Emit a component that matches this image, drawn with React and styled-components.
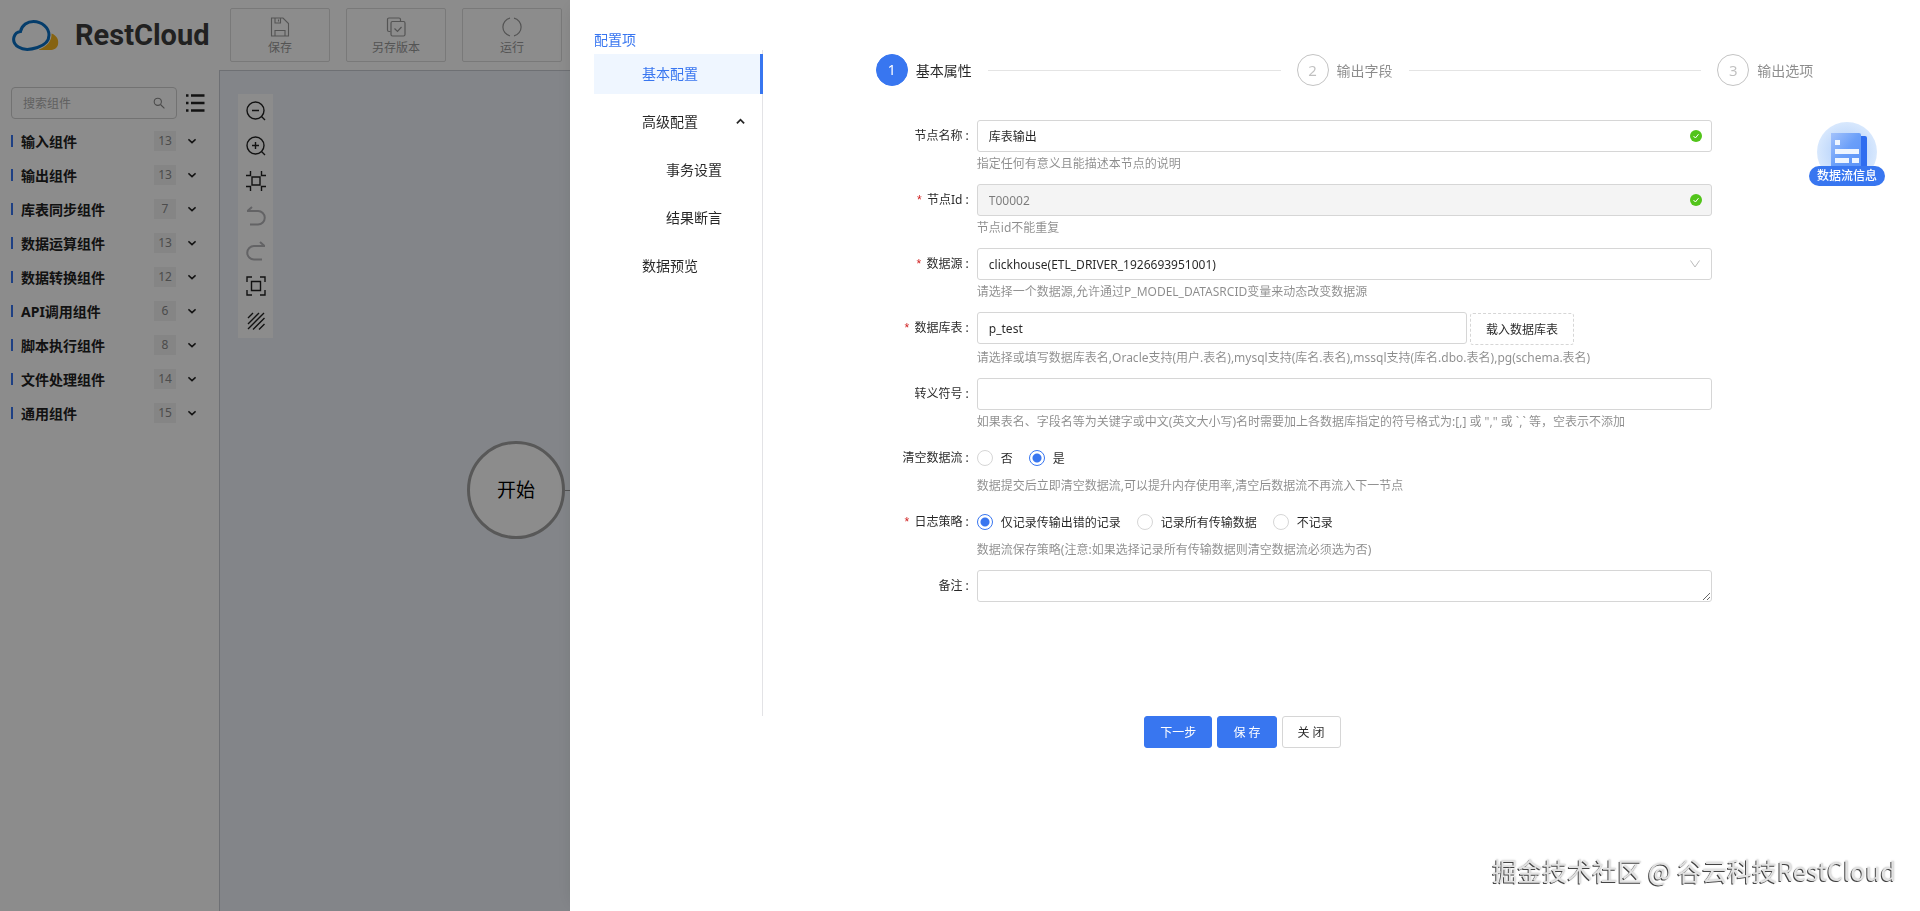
import React, { useState } from 'react';
import styled, { createGlobalStyle } from 'styled-components';

const BLUE = '#3876f0';

const GlobalStyle = createGlobalStyle`
  * { box-sizing: border-box; }
  body {
    margin: 0;
    font-family: "Noto Sans", "Noto Sans CJK SC", sans-serif;
    font-size: 12px;
    color: rgba(0, 0, 0, 0.85);
    background: #fff;
  }
  button, input, select, textarea { font: inherit; color: inherit; }
  button { cursor: pointer; }
  ul { list-style: none; margin: 0; padding: 0; }
  svg { flex: none; }
`;

// Designer page, behind the drawer

const Page = styled.div`
  display: flex;
  flex-direction: column;
  min-height: 100vh;
`;

const Header = styled.header`
  display: flex;
  align-items: center;
  gap: 16px;
  height: 70px;
  padding-left: 11px;
  overflow: hidden;
`;

const Brand = styled.div`
  display: flex;
  flex: none;
  align-items: center;
  gap: 16px;
  width: 203px;
  font-family: Roboto, sans-serif;
  font-size: 29px;
  font-weight: 700;
  color: #3c3c3c;
`;

const ToolButton = styled.button`
  display: flex;
  flex: none;
  flex-direction: column;
  align-items: center;
  justify-content: center;
  gap: 2px;
  width: 100px;
  height: 54px;
  padding: 4px 0 0;
  line-height: 18px;
  color: #999;
  background: #fff;
  border: 1px solid #dcdcdc;
  border-radius: 2px;
`;

const Workspace = styled.div`
  display: flex;
  flex: 1;
`;

const Sidebar = styled.aside`
  flex: none;
  width: 219px;
  padding: 17px 14px 0 11px;
`;

const SearchRow = styled.div`
  display: flex;
  align-items: center;
  gap: 8px;
  margin-bottom: 6px;
`;

const SearchBox = styled.label`
  display: flex;
  flex: 1;
  align-items: center;
  min-width: 0;
  height: 32px;
  padding: 0 11px;
  color: #888;
  border: 1px solid #cfcfcf;
  border-radius: 4px;

  input {
    flex: 1;
    min-width: 0;
    padding: 0;
    border: 0;
    outline: 0;
    background: none;
  }
  input::placeholder { color: #b0b0b0; }
`;

const IconButton = styled.button`
  display: flex;
  padding: 0;
  border: 0;
  background: none;
  color: ${({ $muted }) => ($muted ? '#b4b4b8' : '#222')};
`;

const GroupButton = styled.button`
  display: flex;
  align-items: center;
  width: 100%;
  height: 34px;
  padding: 0 9px 2px 0;
  border: 0;
  background: none;
  text-align: left;
  font-size: 14px;
  font-weight: 700;
  color: #222;

  &::before {
    content: '';
    width: 2px;
    height: 12px;
    margin-right: 8px;
    background: ${BLUE};
  }
`;

const GroupName = styled.span`
  flex: 1;
`;

const Count = styled.span`
  width: 22px;
  margin-right: 12px;
  line-height: 20px;
  font-size: 12px;
  font-weight: 400;
  text-align: center;
  color: #8a8a8a;
  background: #f3f3f3;
`;

const Canvas = styled.main`
  position: relative;
  flex: 1;
  background: #eff3f9;
  border-top: 1px solid #c8ccd4;
  border-left: 1px solid #c8ccd4;
`;

const CanvasTools = styled.div`
  position: absolute;
  top: 23px;
  left: 18px;
  display: flex;
  flex-direction: column;
  align-items: center;
  gap: 15px;
  width: 35px;
  padding: 7px 0;
  background: #fff;
`;

const StartNode = styled.div`
  position: absolute;
  top: 370px;
  left: 247px;
  display: flex;
  align-items: center;
  justify-content: center;
  width: 98px;
  height: 98px;
  padding-bottom: 2px;
  font-size: 19px;
  color: #000;
  background: #fff;
  border: 3px solid #a0a0a0;
  border-radius: 50%;
`;

const Edge = styled.div`
  position: absolute;
  top: 419px;
  left: 345px;
  width: 120px;
  height: 1px;
  background: #999;
`;

// Drawer

const Mask = styled.div`
  position: fixed;
  inset: 0;
  background: rgba(0, 0, 0, 0.45);
`;

const Drawer = styled.section`
  position: fixed;
  top: 0;
  right: 0;
  bottom: 0;
  left: 570px;
  padding: 30px 24px 24px;
  overflow: auto;
  background: #fff;
  box-shadow: -6px 0 16px -8px rgba(0, 0, 0, 0.12);
`;

const DrawerBody = styled.div`
  display: flex;
  gap: 30px;
  min-height: calc(100vh - 225px);
`;

const MenuColumn = styled.nav`
  display: flex;
  flex: none;
  flex-direction: column;
  width: 169px;
`;

const MenuTitle = styled.div`
  line-height: 20px;
  font-size: 14px;
  color: ${BLUE};
`;

const Menu = styled.ul`
  flex: 1;
  display: flex;
  flex-direction: column;
  gap: 8px;
  padding-top: 4px;
  border-right: 1px solid #e3e3e6;
`;

const MenuItem = styled.button`
  display: flex;
  align-items: center;
  justify-content: space-between;
  width: 169px;
  height: 40px;
  padding: 0 15px 2px ${({ $sub }) => ($sub ? '72px' : '48px')};
  border: 0;
  border-right: 3px solid ${({ $active }) => ($active ? BLUE : 'transparent')};
  background: ${({ $active }) => ($active ? '#eff6ff' : 'none')};
  font-size: 14px;
  color: ${({ $active }) => ($active ? BLUE : 'inherit')};
`;

const Content = styled.div`
  flex: 1;
  min-width: 0;
  padding-top: 24px;
`;

const Steps = styled.ol`
  display: flex;
  gap: 16px;
  width: 85%;
  margin: 0 auto 34px;
  padding: 0;
  list-style: none;
`;

const Step = styled.li`
  display: flex;
  flex: ${({ $last }) => ($last ? 'none' : '1')};
  align-items: center;
  font-size: 14px;
  color: ${({ $active }) => ($active ? 'rgba(0, 0, 0, 0.85)' : 'rgba(0, 0, 0, 0.45)')};

  &::after {
    content: '';
    display: ${({ $last }) => ($last ? 'none' : 'block')};
    flex: 1;
    height: 1px;
    margin-left: 16px;
    background: #e4e4e4;
  }
`;

const StepNumber = styled.span`
  width: 32px;
  margin-right: 8px;
  line-height: 30px;
  font-size: ${({ $active }) => ($active ? '14px' : '15px')};
  text-align: center;
  color: ${({ $active }) => ($active ? '#fff' : 'rgba(0, 0, 0, 0.25)')};
  background: ${({ $active }) => ($active ? BLUE : '#fff')};
  border: 1px solid ${({ $active }) => ($active ? BLUE : '#c4c4c4')};
  border-radius: 50%;
`;

const FormRow = styled.div`
  display: grid;
  grid-template-columns: 4fr 16fr 4fr;
  margin-bottom: 8px;
`;

const Label = styled.label`
  padding-right: 8px;
  line-height: 32px;
  text-align: right;
`;

const Required = styled.span`
  margin-right: 4px;
  font-family: "Liberation Mono", monospace;
  color: #d02020;
`;

const Help = styled.div`
  line-height: 24px;
  color: rgba(0, 0, 0, 0.45);
`;

const InputBox = styled.div`
  display: flex;
  align-items: center;
  height: 32px;
  padding: 0 9px 0 11px;
  color: ${({ $disabled }) => ($disabled ? 'rgba(0, 0, 0, 0.5)' : 'inherit')};
  background: ${({ $disabled }) => ($disabled ? '#f4f4f4' : '#fff')};
  border: 1px solid #d6d6d6;
  border-radius: 3px;

  input {
    flex: 1;
    min-width: 0;
    padding: 0;
    border: 0;
    outline: 0;
    background: none;
  }
`;

const SelectBox = styled.div`
  position: relative;

  select {
    display: block;
    width: 100%;
    height: 32px;
    padding: 0 30px 0 11px;
    appearance: none;
    background: #fff;
    border: 1px solid #d6d6d6;
    border-radius: 3px;
  }
  svg {
    position: absolute;
    top: 11px;
    right: 12px;
    pointer-events: none;
  }
`;

const TableField = styled.div`
  display: flex;
  gap: 3px;
  height: 34px;

  ${InputBox} { width: calc(100% * 2 / 3); }
`;

const RadioRow = styled.div`
  display: flex;
  align-items: center;
  gap: 16px;
  height: 32px;
`;

const RadioLabel = styled.label`
  display: flex;
  align-items: center;
  gap: 8px;
`;

const Radio = styled.input.attrs({ type: 'radio' })`
  appearance: none;
  width: 16px;
  height: 16px;
  margin: 0;
  border: 1px solid #d6d6d6;
  border-radius: 50%;

  &:checked {
    border-color: ${BLUE};
    background: radial-gradient(circle, ${BLUE} 0 4px, #fff 5px);
  }
`;

const TextArea = styled.textarea`
  display: block;
  width: 100%;
  height: 32px;
  padding: 4px 11px;
  border: 1px solid #d6d6d6;
  border-radius: 3px;
  resize: vertical;
`;

const Button = styled.button`
  align-self: center;
  height: 32px;
  padding: 0 15px;
  color: ${({ $primary }) => ($primary ? '#fff' : 'inherit')};
  background: ${({ $primary }) => ($primary ? BLUE : '#fff')};
  border: 1px ${({ $dashed }) => ($dashed ? 'dashed' : 'solid')} ${({ $primary }) => ($primary ? BLUE : '#d6d6d6')};
  border-radius: 3px;
`;

const Footer = styled.div`
  display: flex;
  justify-content: center;
  gap: 5px;
  padding-right: 5px;
`;

const FlowInfo = styled.button`
  position: fixed;
  top: 122px;
  right: 35px;
  display: flex;
  flex-direction: column;
  align-items: center;
  width: 76px;
  padding: 0;
  border: 0;
  background: none;

  span {
    width: 100%;
    line-height: 20px;
    margin-top: -16px;
    font-weight: 500;
    color: #fff;
    background: ${BLUE};
    border-radius: 10px;
    z-index: 1;
  }
`;

const Watermark = styled.div`
  position: fixed;
  right: 24px;
  bottom: 23px;
  line-height: 36px;
  font-family: "Noto Sans CJK SC", sans-serif;
  font-size: 25px;
  color: #e2e2e2;
  text-shadow: -1px 1px 0 #444, 0 0 2px #bbb;
  pointer-events: none;
`;

// Icons

function Icon({ size = 20, width = 1.4, children }) {
  return (
    <svg width={size} height={size} viewBox="0 0 20 20" fill="none" stroke="currentColor" strokeWidth={width} aria-hidden="true">
      {children}
    </svg>
  );
}

function CloudLogo() {
  return (
    <svg width="48" height="32" viewBox="0 0 48 32" aria-hidden="true">
      <path d="M28 30.5C36 27.5 41 22 40.5 14.5C46 16.5 48 21 47 25.5C46 29.5 43 31 39 31H28Z" fill="#f5b520" />
      <path
        d="M9.5 12.5C11 6 16.5 2.5 22.5 2.5C31 2.5 38 9 38 16C38 22.5 32.5 26.5 26.5 28.5C19.5 30.8 12 31 7.5 28C3.5 25.5 2 21.5 3 18C4 14.5 6.5 12.8 9.5 12.5Z"
        fill="#fff"
        stroke="#0a6fc4"
        strokeWidth="3"
      />
    </svg>
  );
}

const SaveIcon = () => (
  <Icon width={1.1}>
    <path d="M1.5 1H13L18.5 6.5V19H1.5Z M5 1V6H10.5V1 M8.5 2.5V4.5 M5 19V13.5H15V19" />
  </Icon>
);

const SaveAsIcon = () => (
  <Icon width={1.2}>
    <path d="M4.5 14.5H3A1.5 1.5 0 0 1 1.5 13V2.5A1.5 1.5 0 0 1 3 1H13A1.5 1.5 0 0 1 14.5 2.5V4" />
    <rect x="5" y="4.5" width="14" height="14.5" rx="1.5" />
    <path d="M8.5 11.5L11.5 14.5L15.5 10" />
  </Icon>
);

const RunIcon = () => (
  <Icon width={1.2}>
    <path d="M8 1.2A9 9 0 0 0 8 18.8 M12 1.2A9 9 0 0 1 12 18.8" />
  </Icon>
);

const SearchIcon = () => (
  <Icon size={12} width={1.8}>
    <circle cx="8" cy="8" r="6" />
    <path d="M12.5 12.5L19 19" />
  </Icon>
);

const ListIcon = () => (
  <Icon width={2.6}>
    <path d="M6 2.5H19.5 M6 10H19.5 M6 17.5H19.5 M1 2.5H3.5 M1 10H3.5 M1 17.5H3.5" />
  </Icon>
);

const ChevronIcon = ({ up }) => (
  <Icon size={up ? 9 : 8} width={4}>
    <path d={up ? 'M2 14L10 6L18 14' : 'M1 6L10 14L19 6'} />
  </Icon>
);

const CheckIcon = () => (
  <svg width="12" height="12" viewBox="0 0 12 12" aria-hidden="true">
    <circle cx="6" cy="6" r="6" fill="#52c41a" />
    <path d="M3.5 6L5.4 8L8.5 4.2" fill="none" stroke="#fff" />
  </svg>
);

const canvasTools = [
  { name: '缩小', art: <><circle cx="9.5" cy="9.5" r="8.5" /><path d="M6 9.5H13 M15.5 15.5L19 19" /></> },
  { name: '放大', art: <><circle cx="9.5" cy="9.5" r="8.5" /><path d="M6 9.5H13 M9.5 6V13 M15.5 15.5L19 19" /></> },
  { name: '适应内容', art: <path d="M6 6H14V14H6Z M0 4.5H4.5V0 M15.5 0V4.5H20 M0 15.5H4.5V20 M15.5 20V15.5H20" /> },
  { name: '撤销', muted: true, art: <path d="M1 5H12A6.5 6.5 0 0 1 12 18.5H4 M1.5 5L6 1" /> },
  { name: '重做', muted: true, art: <path d="M19 5H8A6.5 6.5 0 0 0 8 18.5H16 M18.5 5L14 1" /> },
  { name: '全屏', art: <path d="M5.5 5.5H14.5V14.5H5.5Z M1 6V1H6 M14 1H19V6 M1 14V19H6 M14 19H19V14" /> },
  { name: '网格', art: <path d="M2 7L7 2 M2 13L13 2 M2 18L18 2 M7 18.5L18.5 7 M13 18.5L18.5 13" /> },
];

const groups = [
  ['输入组件', 13],
  ['输出组件', 13],
  ['库表同步组件', 7],
  ['数据运算组件', 13],
  ['数据转换组件', 12],
  ['API调用组件', 6],
  ['脚本执行组件', 8],
  ['文件处理组件', 14],
  ['通用组件', 15],
];

const menuItems = [
  { text: '基本配置' },
  { text: '高级配置', open: true },
  { text: '事务设置', sub: true },
  { text: '结果断言', sub: true },
  { text: '数据预览' },
];

const steps = ['基本属性', '输出字段', '输出选项'];

function Field({ id, label, required, help, children }) {
  return (
    <FormRow>
      <Label htmlFor={id}>
        {required && <Required>*</Required>}
        {label}
        {' :'}
      </Label>
      <div>
        {children}
        {help && <Help>{help}</Help>}
      </div>
    </FormRow>
  );
}

function RadioGroup({ id, options, value, onChange }) {
  return (
    <RadioRow>
      {options.map((option, i) => (
        <RadioLabel key={option}>
          <Radio
            id={i === 0 ? id : undefined}
            name={id}
            checked={value === option}
            onChange={() => onChange(option)}
          />
          {option}
        </RadioLabel>
      ))}
    </RadioRow>
  );
}

function Designer() {
  return (
    <Page>
      <Header>
        <Brand>
          <CloudLogo />
          RestCloud
        </Brand>
        <ToolButton>
          <SaveIcon />
          保存
        </ToolButton>
        <ToolButton>
          <SaveAsIcon />
          另存版本
        </ToolButton>
        <ToolButton>
          <RunIcon />
          运行
        </ToolButton>
      </Header>
      <Workspace>
        <Sidebar>
          <SearchRow>
            <SearchBox>
              <input placeholder="搜索组件" aria-label="搜索组件" />
              <SearchIcon />
            </SearchBox>
            <IconButton aria-label="列表"><ListIcon /></IconButton>
          </SearchRow>
          {groups.map(([name, count]) => (
            <GroupButton key={name}>
              <GroupName>{name}</GroupName>
              <Count>{count}</Count>
              <ChevronIcon />
            </GroupButton>
          ))}
        </Sidebar>
        <Canvas>
          <CanvasTools>
            {canvasTools.map(({ name, muted, art }) => (
              <IconButton key={name} aria-label={name} $muted={muted}>
                <Icon width={muted ? 2 : 1.4}>{art}</Icon>
              </IconButton>
            ))}
          </CanvasTools>
          <Edge />
          <StartNode>开始</StartNode>
        </Canvas>
      </Workspace>
    </Page>
  );
}

function NodeForm() {
  const [clear, setClear] = useState('是');
  const [log, setLog] = useState('仅记录传输出错的记录');

  return (
    <form>
      <Field id="nodeName" label="节点名称" help="指定任何有意义且能描述本节点的说明">
        <InputBox>
          <input id="nodeName" defaultValue="库表输出" />
          <CheckIcon />
        </InputBox>
      </Field>
      <Field id="nodeId" label="节点Id" required help="节点id不能重复">
        <InputBox $disabled>
          <input id="nodeId" defaultValue="T00002" disabled />
          <CheckIcon />
        </InputBox>
      </Field>
      <Field id="source" label="数据源" required help="请选择一个数据源,允许通过P_MODEL_DATASRCID变量来动态改变数据源">
        <SelectBox>
          <select id="source">
            <option>clickhouse(ETL_DRIVER_1926693951001)</option>
          </select>
          <svg width="10" height="10" viewBox="0 0 10 10" fill="none" stroke="#bbb" aria-hidden="true">
            <path d="M0.5 1.5L5 8L9.5 1.5" />
          </svg>
        </SelectBox>
      </Field>
      <Field
        id="table"
        label="数据库表"
        required
        help="请选择或填写数据库表名,Oracle支持(用户.表名),mysql支持(库名.表名),mssql支持(库名.dbo.表名),pg(schema.表名)"
      >
        <TableField>
          <InputBox>
            <input id="table" defaultValue="p_test" />
          </InputBox>
          <Button type="button" $dashed>载入数据库表</Button>
        </TableField>
      </Field>
      <Field
        id="escape"
        label="转义符号"
        help={'如果表名、字段名等为关键字或中文(英文大小写)名时需要加上各数据库指定的符号格式为:[,] 或 "," 或 `,` 等，空表示不添加'}
      >
        <InputBox>
          <input id="escape" />
        </InputBox>
      </Field>
      <Field id="clear" label="清空数据流" help="数据提交后立即清空数据流,可以提升内存使用率,清空后数据流不再流入下一节点">
        <RadioGroup id="clear" options={['否', '是']} value={clear} onChange={setClear} />
      </Field>
      <Field id="log" label="日志策略" required help="数据流保存策略(注意:如果选择记录所有传输数据则清空数据流必须选为否)">
        <RadioGroup
          id="log"
          options={['仅记录传输出错的记录', '记录所有传输数据', '不记录']}
          value={log}
          onChange={setLog}
        />
      </Field>
      <Field id="remark" label="备注">
        <TextArea id="remark" rows={1} />
      </Field>
    </form>
  );
}

function FlowInfoBadge() {
  return (
    <FlowInfo>
      <svg width="60" height="60" viewBox="0 0 60 60" aria-hidden="true">
        <defs>
          <radialGradient id="disc">
            <stop offset="0.4" stopColor="#bcd6fb" />
            <stop offset="1" stopColor="#d8e8fd" />
          </radialGradient>
          <linearGradient id="sheet" x1="0" y1="0" x2="1" y2="1">
            <stop offset="0" stopColor="#a3c2fb" />
            <stop offset="0.5" stopColor="#6a9ff9" />
            <stop offset="1" stopColor="#5a92f8" />
          </linearGradient>
        </defs>
        <circle cx="30" cy="30" r="30" fill="url(#disc)" />
        <path d="M40 14H48A2 2 0 0 1 50 16V46H40Z" fill="#2f6df0" />
        <path d="M14 11H42A2 2 0 0 1 44 13V46H14Z" fill="url(#sheet)" />
        <path d="M18 18H23V23H18Z M18 27H42V32H18Z M18 36H32V41H18Z M35 36H42V41H35Z" fill="#eef5ff" />
      </svg>
      <span>数据流信息</span>
    </FlowInfo>
  );
}

export default function App() {
  const [active, setActive] = useState('基本配置');

  return (
    <>
      <GlobalStyle />
      <Designer />
      <Mask />
      <Drawer>
        <DrawerBody>
          <MenuColumn>
            <MenuTitle>配置项</MenuTitle>
            <Menu>
              {menuItems.map(({ text, sub, open }) => (
                <li key={text}>
                  <MenuItem $sub={sub} $active={active === text} onClick={() => setActive(text)}>
                    {text}
                    {open && <ChevronIcon up />}
                  </MenuItem>
                </li>
              ))}
            </Menu>
          </MenuColumn>
          <Content>
            <Steps>
              {steps.map((text, i) => (
                <Step key={text} $active={i === 0} $last={i === steps.length - 1}>
                  <StepNumber $active={i === 0}>{i + 1}</StepNumber>
                  {text}
                </Step>
              ))}
            </Steps>
            <NodeForm />
          </Content>
        </DrawerBody>
        <Footer>
          <Button $primary>下一步</Button>
          <Button $primary>保 存</Button>
          <Button>关 闭</Button>
        </Footer>
      </Drawer>
      <FlowInfoBadge />
      <Watermark>掘金技术社区 @ 谷云科技RestCloud</Watermark>
    </>
  );
}
